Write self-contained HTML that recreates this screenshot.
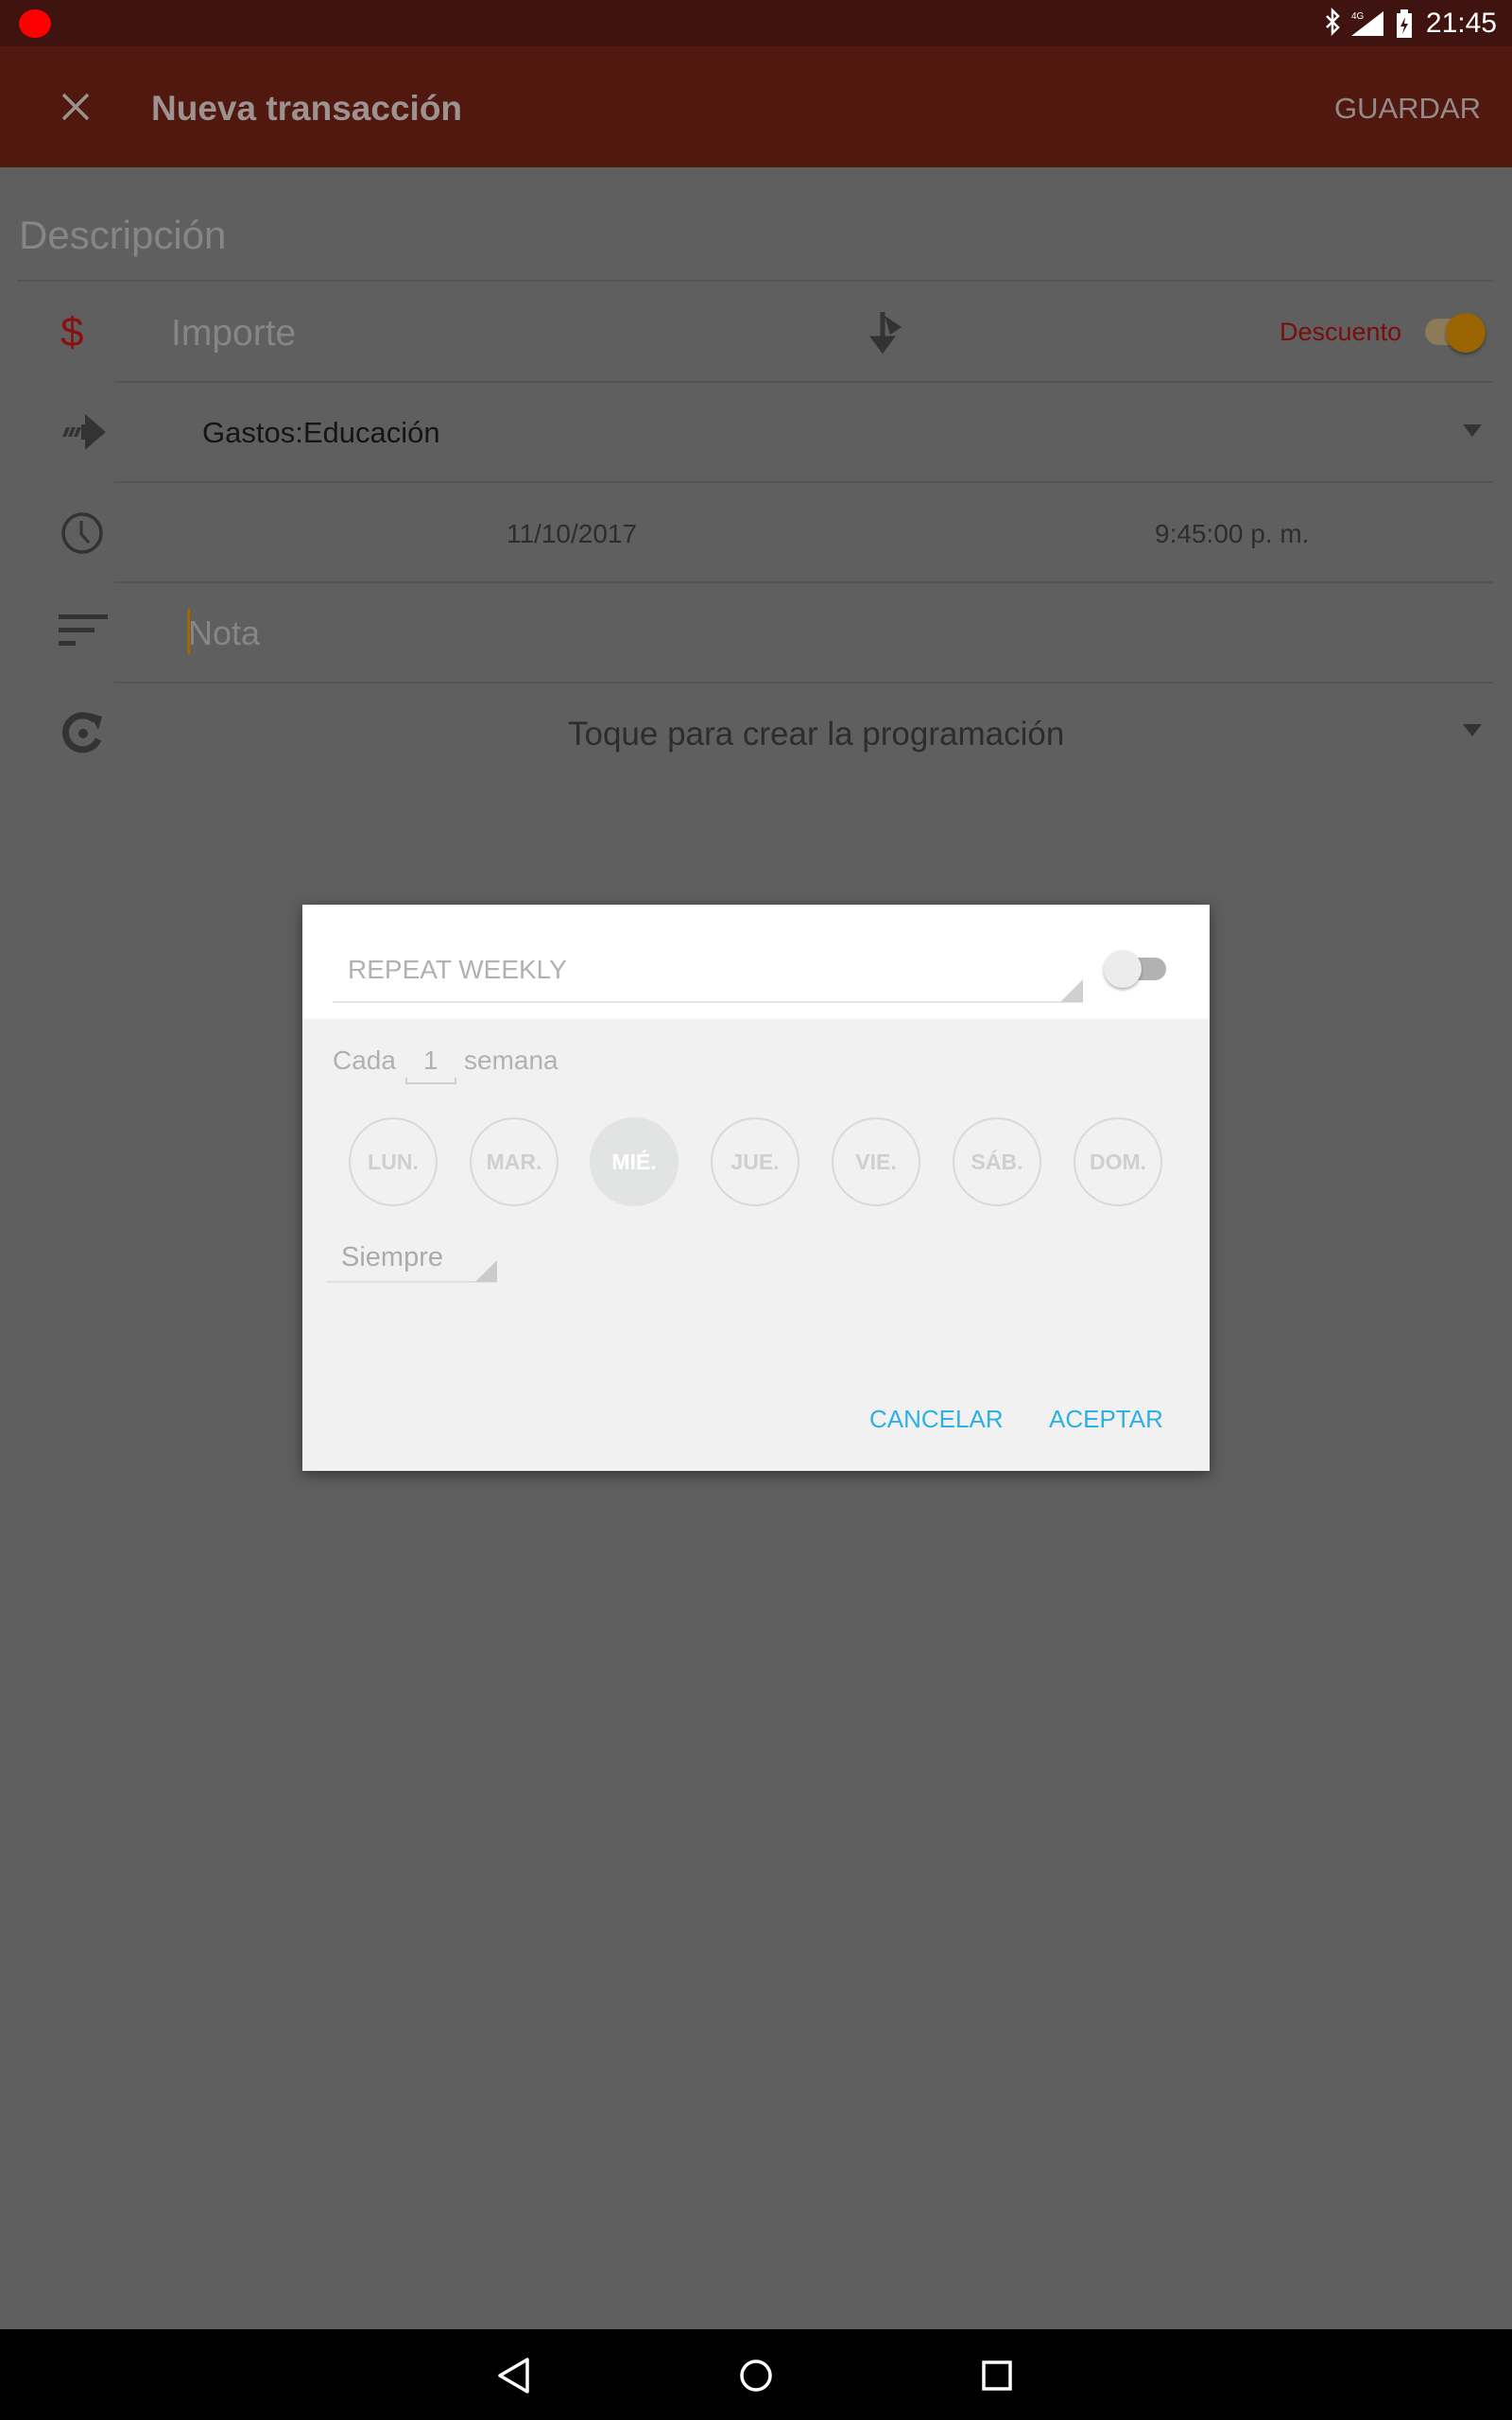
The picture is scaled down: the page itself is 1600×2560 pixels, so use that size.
<!DOCTYPE html>
<html><head><meta charset="utf-8"><style>
*{margin:0;padding:0;box-sizing:border-box}
body{width:1600px;height:2560px;background:#5f5f5f;font-family:"Liberation Sans",sans-serif;position:relative;overflow:hidden}
.a{position:absolute}
.line{position:absolute;height:2px;background:#545454}
.t{position:absolute;white-space:nowrap;line-height:1}
.day{position:absolute;width:94px;height:94px;border:2px solid #d9d9d9;border-radius:50%;color:#cfcfcf;font-weight:bold;font-size:23px;display:flex;align-items:center;justify-content:center;top:1182px}
</style></head><body>
<div class="a" style="left:0;top:0;width:1600px;height:49px;background:#3f1410"></div>
<div class="a" style="left:20px;top:10px;width:34px;height:30px;border-radius:50%;background:#f00"></div>
<div class="t" style="right:16px;top:10px;font-size:30px;color:#fff">21:45</div>
<svg class="a" style="left:1390px;top:8px" width="110" height="34" viewBox="0 0 110 34"><path d="M14 9l12 12-6 6V3l6 6L14 21" fill="none" stroke="#fff" stroke-width="2.5"/><text x="40" y="12" font-size="10" fill="#fff" font-family="Liberation Sans">4G</text><path d="M40 30L74 4v26z" fill="#fff"/><rect x="88" y="6" width="16" height="26" fill="#fff"/><rect x="92" y="2" width="8" height="4" fill="#fff"/><path d="M97 10l-5 10h4l-2 8 6-11h-4z" fill="#3f1410"/></svg>
<div class="a" style="left:0;top:49px;width:1600px;height:128px;background:#50180f"></div>
<svg class="a" style="left:64px;top:97px" width="32" height="32"><path d="M3 3L29 29M29 3L3 29" stroke="#9c9290" stroke-width="3.5"/></svg>
<div class="t" style="left:160px;top:96px;font-size:37px;color:#9c9290;font-weight:bold">Nueva transacción</div>
<div class="t" style="right:33px;top:99px;font-size:31px;color:#948b89">GUARDAR</div>

<div class="t" style="left:20px;top:228px;font-size:42px;color:#868686">Descripción</div>
<div class="line" style="left:18px;top:296px;width:1562px"></div>
<div class="t" style="left:64px;top:330px;font-size:44px;color:#8a1010">$</div>
<div class="t" style="left:181px;top:333px;font-size:39px;color:#868686">Importe</div>
<svg class="a" style="left:920px;top:328px" width="40" height="46"><path d="M14 2v38M5 30l9 12 9-12z" stroke="#333" stroke-width="5" fill="#333"/><path d="M16 6l18 12-12 8z" fill="#333"/></svg>
<div class="t" style="left:1354px;top:338px;font-size:27px;color:#7a0d0d">Descuento</div>
<div class="a" style="left:1508px;top:337px;width:52px;height:28px;border-radius:14px;background:#8c7a58"></div>
<div class="a" style="left:1530px;top:331px;width:42px;height:42px;border-radius:50%;background:#9a6400;box-shadow:0 2px 3px rgba(0,0,0,.4)"></div>
<div class="line" style="left:121px;top:403px;width:1459px"></div>
<svg class="a" style="left:64px;top:436px" width="50" height="42"><path d="M26 2l22 19-22 19z" fill="#333"/><rect x="22" y="13" width="8" height="16" fill="#333"/><path d="M6 16h4l-4 10H2zM12 16h4l-4 10H8zM18 16h4l-4 10h-4z" fill="#333"/></svg>
<div class="t" style="left:214px;top:442px;font-size:31px;color:#151515">Gastos:Educación</div>
<svg class="a" style="left:1548px;top:449px" width="20" height="14"><path d="M0 0h20L10 13z" fill="#333"/></svg>
<div class="line" style="left:121px;top:509px;width:1459px"></div>
<svg class="a" style="left:64px;top:541px" width="46" height="46"><circle cx="23" cy="23" r="20" fill="none" stroke="#333" stroke-width="3.5"/><path d="M22 10v14l8 9" fill="none" stroke="#333" stroke-width="3"/></svg>
<div class="t" style="left:536px;top:551px;font-size:28px;color:#2d2d2d">11/10/2017</div>
<div class="t" style="left:1222px;top:551px;font-size:28px;color:#2d2d2d">9:45:00 p. m.</div>
<div class="line" style="left:121px;top:615px;width:1459px"></div>
<svg class="a" style="left:62px;top:650px" width="54" height="36"><rect x="0" y="0" width="52" height="5" fill="#333"/><rect x="0" y="14" width="38" height="5" fill="#333"/><rect x="0" y="28" width="18" height="5" fill="#333"/></svg>
<div class="a" style="left:198px;top:644px;width:3px;height:48px;background:#a06800"></div>
<div class="t" style="left:199px;top:652px;font-size:36px;color:#868686">Nota</div>
<div class="line" style="left:121px;top:721px;width:1459px"></div>
<svg class="a" style="left:64px;top:752px" width="48" height="48"><path d="M36 10A18 18 0 1 0 40 30" fill="none" stroke="#333" stroke-width="7"/><path d="M30 2l14 4-4 14z" fill="#333"/><circle cx="24" cy="24" r="5" fill="#333"/></svg>
<div class="t" style="left:601px;top:759px;font-size:35px;color:#2d2d2d">Toque para crear la programación</div>
<svg class="a" style="left:1548px;top:766px" width="20" height="14"><path d="M0 0h20L10 13z" fill="#333"/></svg>

<div class="a" style="left:320px;top:957px;width:960px;height:599px;background:#f1f1f1;box-shadow:0 4px 14px rgba(0,0,0,.45)"></div>
<div class="a" style="left:320px;top:957px;width:960px;height:121px;background:#fff"></div>
<div class="t" style="left:368px;top:1012px;font-size:28px;color:#b1b1b1">REPEAT WEEKLY</div>
<div class="a" style="left:352px;top:1059px;width:794px;height:2px;background:#e6e6e6"></div>
<svg class="a" style="left:1122px;top:1036px" width="25" height="25"><path d="M24 0v24H0z" fill="#d0d0d0"/></svg>
<div class="a" style="left:1190px;top:1013px;width:44px;height:24px;border-radius:12px;background:#b2b2b2"></div>
<div class="a" style="left:1168px;top:1005px;width:40px;height:40px;border-radius:50%;background:#ececec;box-shadow:0 2px 3px rgba(0,0,0,.3)"></div>

<div class="t" style="left:352px;top:1108px;font-size:28px;color:#b1b1b1">Cada</div>
<div class="t" style="left:448px;top:1108px;font-size:28px;color:#b1b1b1">1</div>
<div class="a" style="left:429px;top:1140px;width:54px;height:7px;border:2px solid #cfcfcf;border-top:none"></div>
<div class="t" style="left:491px;top:1108px;font-size:28px;color:#b1b1b1">semana</div>

<div class="day" style="left:369px">LUN.</div>
<div class="day" style="left:497px">MAR.</div>
<div class="day" style="left:624px;background:#e2e3e3;border-color:#e2e3e3;color:#fff">MIÉ.</div>
<div class="day" style="left:752px">JUE.</div>
<div class="day" style="left:880px">VIE.</div>
<div class="day" style="left:1008px">SÁB.</div>
<div class="day" style="left:1136px">DOM.</div>

<div class="t" style="left:361px;top:1316px;font-size:29px;color:#ababab">Siempre</div>
<div class="a" style="left:345px;top:1355px;width:181px;height:2px;background:#e0e0e0"></div>
<svg class="a" style="left:503px;top:1333px" width="24" height="24"><path d="M23 0v23H0z" fill="#cbcbcb"/></svg>

<div class="t" style="left:920px;top:1488px;font-size:26px;color:#2fb0e4;font-weight:500">CANCELAR</div>
<div class="t" style="left:1110px;top:1488px;font-size:26px;color:#2fb0e4;font-weight:500">ACEPTAR</div>

<div class="a" style="left:0;top:2464px;width:1600px;height:96px;background:#000"></div>
<svg class="a" style="left:520px;top:2488px" width="50" height="50"><path d="M38 8v34L9 25z" fill="none" stroke="#fff" stroke-width="3.5" stroke-linejoin="round"/></svg>
<svg class="a" style="left:776px;top:2488px" width="50" height="50"><circle cx="24" cy="25" r="15" fill="none" stroke="#fff" stroke-width="3.5"/></svg>
<svg class="a" style="left:1031px;top:2488px" width="50" height="50"><rect x="10" y="11" width="28" height="28" fill="none" stroke="#fff" stroke-width="3.5"/></svg>
</body></html>
